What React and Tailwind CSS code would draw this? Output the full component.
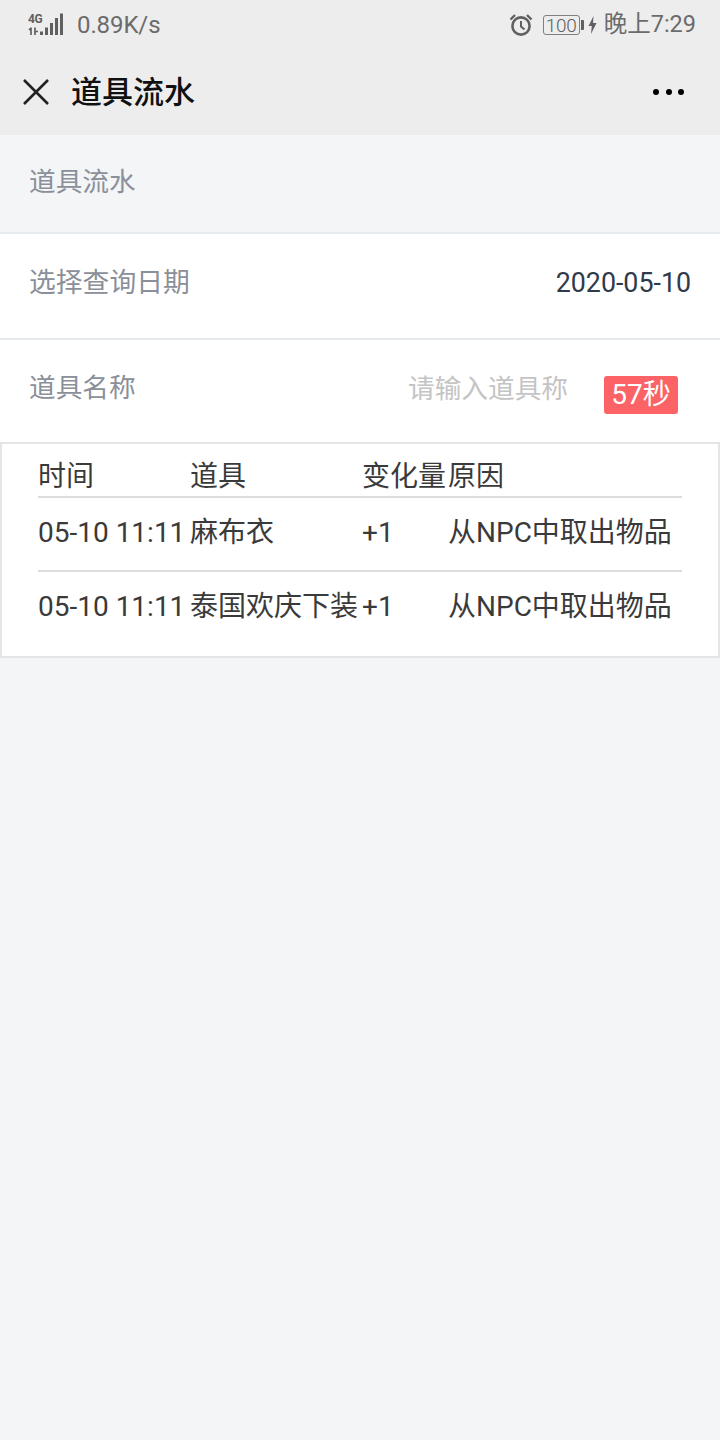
import React from "react";

function Signal() {
  return (
    <div className="relative w-[36px] h-[24px] shrink-0">
      <svg width="36" height="24" viewBox="0 0 36 24" className="block">
        <path d="M3 15 L1 17 M3 14.5 V22 M7 14.5 V22 M7 18.5 H10" stroke="#606060" strokeWidth="1.7" fill="none" />
        <rect x="12" y="18.5" width="3" height="3.5" fill="#606060" />
        <rect x="17" y="14.5" width="3" height="7.5" fill="#606060" />
        <rect x="22" y="10" width="3" height="12" fill="#606060" />
        <rect x="27" y="5" width="3" height="17" fill="#606060" />
        <rect x="32" y="0.5" width="3" height="21.5" fill="#606060" />
      </svg>
      <span className="absolute left-0 top-0 text-[12px] leading-[12px] font-bold text-[#606060] tracking-[-0.3px]">4G</span>
    </div>
  );
}

function Alarm() {
  return (
    <svg width="24" height="24" viewBox="0 0 24 24" className="shrink-0">
      <circle cx="12" cy="13" r="8.6" fill="none" stroke="#606060" strokeWidth="2.6" />
      <path d="M12 8 V13.5 L15.5 16.5" fill="none" stroke="#606060" strokeWidth="2" />
      <path d="M1.5 6.5 L6 2 M22.5 6.5 L18 2" stroke="#606060" strokeWidth="2.4" />
    </svg>
  );
}

function Battery() {
  return (
    <div className="flex items-center shrink-0">
      <div className="w-[37px] h-[20px] border border-[#808080] rounded-[3px] flex items-center justify-center text-[19px] font-light leading-none text-[#606060] tracking-[-0.3px]">
        100
      </div>
      <div className="w-[3px] h-[10px] bg-[#606060] ml-px rounded-r-[1px]" />
    </div>
  );
}

function Bolt() {
  return (
    <svg width="9" height="18" viewBox="0 0 9 18" className="shrink-0">
      <path d="M5.5 0 L0.5 10 H3.8 L3 18 L8.5 7 H5 Z" fill="#606060" />
    </svg>
  );
}

const rows = [
  ["05-10 11:11", "麻布衣", "+1", "从NPC中取出物品"],
  ["05-10 11:11", "泰国欢庆下装", "+1", "从NPC中取出物品"],
];

function Row({ cells, className }) {
  return (
    <div className={"flex text-[28px] leading-[40px] text-[#3a3a3a] whitespace-nowrap " + className}>
      <div className="w-[152px]">{cells[0]}</div>
      <div className="w-[172px]">{cells[1]}</div>
      <div className="w-[86px]">{cells[2]}</div>
      <div>{cells[3]}</div>
    </div>
  );
}

export default function App() {
  return (
    <div
      className="w-[720px] h-[1440px] bg-[#f3f5f7] overflow-hidden"
      style={{ fontFamily: 'Roboto, "Noto Sans CJK SC", sans-serif' }}
    >
      <div className="bg-[#ededed] h-[135px]">
        <div className="h-[50px] flex items-center pl-[28px] pr-[24px] text-[24px] text-[#6b6b6b]">
          <Signal />
          <span className="ml-[13px] tracking-[-0.1px]">0.89K/s</span>
          <div className="ml-auto flex items-center">
            <Alarm />
            <div className="ml-[10px]"><Battery /></div>
            <div className="ml-[4px]"><Bolt /></div>
            <span className="ml-[7px] text-[23.5px]">晚上7:29</span>
          </div>
        </div>
        <div className="h-[84px] flex items-center pl-[22px] pr-[36px]">
          <svg width="28" height="28" viewBox="0 0 28 28" className="shrink-0">
            <path d="M2 2 L26 26 M26 2 L2 26" stroke="#222222" strokeWidth="2.6" fill="none" />
          </svg>
          <div className="ml-[21px] text-[31px] font-medium text-[#111111] leading-none">道具流水</div>
          <div className="ml-auto flex gap-[6.5px]">
            <span className="w-[6px] h-[6px] rounded-full bg-black" />
            <span className="w-[6px] h-[6px] rounded-full bg-black" />
            <span className="w-[6px] h-[6px] rounded-full bg-black" />
          </div>
        </div>
      </div>

      <div className="h-[97px] pl-[29px] pt-[27px] text-[26.67px] leading-[40px] text-[#8a8f99]">道具流水</div>

      <div className="h-[108px] bg-white border-y-2 border-[#e6ebf0] flex items-center justify-between pl-[29px] pr-[29px] pb-[6px] text-[26.8px]">
        <span className="text-[#8a8f99]">选择查询日期</span>
        <span className="text-[#2f3a4a]">2020-05-10</span>
      </div>

      <div className="h-[102px] bg-white flex pl-[29px] pr-[42px] text-[26.67px] leading-[40px]">
        <span className="text-[#8a8f99] mt-[28px]">道具名称</span>
        <span className="ml-auto text-[#c4c4c4] mt-[29px]">请输入道具称</span>
        <span className="ml-[36px] mt-[36px] w-[74px] h-[38px] bg-[#fb6366] rounded-[3px] text-white text-[28px] flex items-center justify-center leading-none">
          57秒
        </span>
      </div>

      <div className="h-[216px] bg-white border-2 border-[#e5e5e5] pl-[36px] pr-[36px] pt-[10px]">
        <Row cells={["时间", "道具", "变化量", "原因"]} className="h-[44px] pt-[2px] border-b-2 border-[#dddddd] [&>div]:translate-y-[1px]" />
        <Row cells={rows[0]} className="h-[74px] pt-[15px] border-b-2 border-[#dddddd]" />
        <Row cells={rows[1]} className="h-[74px] pt-[15px]" />
      </div>
    </div>
  );
}
